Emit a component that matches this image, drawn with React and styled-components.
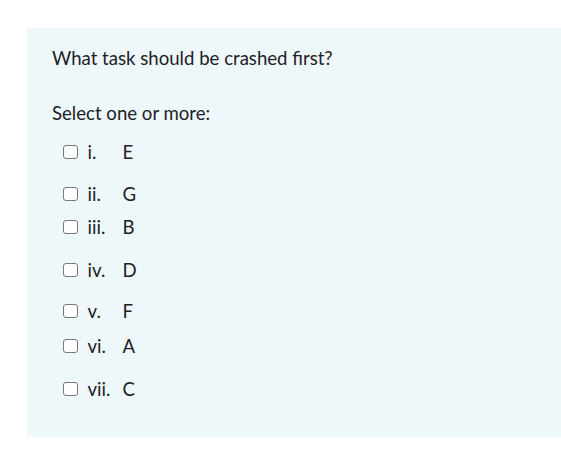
import React from 'react';
import styled, { createGlobalStyle } from 'styled-components';

const GlobalStyle = createGlobalStyle`
  html, body {
    margin: 0;
    padding: 0;
    background: #ffffff;
  }
  body {
    font-family: Lato, "Noto Sans", sans-serif;
    color: #1d2125;
  }
`;

const Page = styled.div`
  padding: 28px 0 15px 27px;
`;

const Panel = styled.div`
  background: #eef7fa;
  height: 409px;
  box-sizing: border-box;
  padding: 17px 25px 0 25px;
`;

const Question = styled.p`
  margin: 0;
  font-size: 18.6px;
  line-height: 26px;
`;

const Prompt = styled.p`
  margin: 29px 0 0 0;
  font-size: 18.6px;
  line-height: 26px;
`;

const Options = styled.div`
  display: flex;
  flex-direction: column;
  margin-top: 13px;
`;

const Row = styled.label`
  display: flex;
  align-items: center;
  height: 26px;
  margin-top: ${p => p.$gap}px;
  padding-left: 11px;
  font-size: 18.6px;
  cursor: pointer;
`;

const Box = styled.span`
  width: 12.5px;
  height: 12.5px;
  border: 1.5px solid #777777;
  border-radius: 3px;
  background: #ffffff;
  flex: none;
`;

const Num = styled.span`
  width: 35px;
  margin-left: 10px;
`;

const Letter = styled.span``;

const options = [
  { n: 'i.', l: 'E', gap: 0 },
  { n: 'ii.', l: 'G', gap: 16 },
  { n: 'iii.', l: 'B', gap: 7 },
  { n: 'iv.', l: 'D', gap: 17 },
  { n: 'v.', l: 'F', gap: 15 },
  { n: 'vi.', l: 'A', gap: 9 },
  { n: 'vii.', l: 'C', gap: 17 },
];

export default function App() {
  return (
    <>
      <GlobalStyle />
      <Page>
        <Panel>
          <Question>What task should be crashed first?</Question>
          <Prompt>Select one or more:</Prompt>
          <Options>
            {options.map(o => (
              <Row key={o.n} $gap={o.gap}>
                <Box />
                <Num>{o.n}</Num>
                <Letter>{o.l}</Letter>
              </Row>
            ))}
          </Options>
        </Panel>
      </Page>
    </>
  );
}
